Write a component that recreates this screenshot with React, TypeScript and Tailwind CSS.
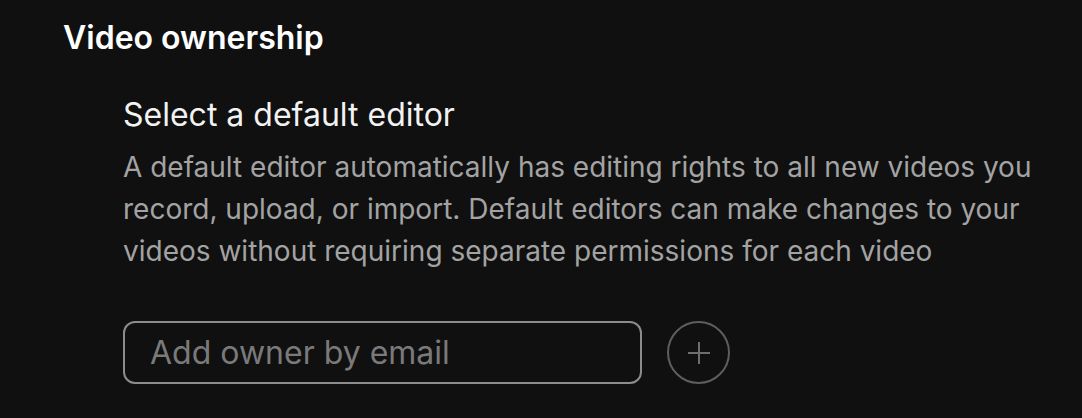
export default function App() {
  return (
    <div
      className="h-[418px] w-full bg-[#101010] pl-[63px] pt-[18px]"
      style={{ fontFamily: "Inter, 'Noto Sans', sans-serif" }}
    >
      <h2 className="text-[32px] font-semibold leading-[40px] text-white">Video ownership</h2>

      <div className="pl-[60px] pt-[37px]">
        <h3 className="text-[32px] font-normal leading-[40px] text-[#f2f2f2]">Select a default editor</h3>
        <p className="mt-[11px] w-[930px] text-[28px] leading-[42px] text-[#a3a3a3]">
          A default editor automatically has editing rights to all new videos you record, upload, or import. Default
          editors can make changes to your videos without requiring separate permissions for each video
        </p>

        <div className="mt-[49px] flex items-center gap-[25px]">
          <input
            type="text"
            placeholder="Add owner by email"
            className="h-[63px] w-[519px] rounded-[12px] border-2 border-[#8c8c8c] bg-transparent px-[25px] text-[32px] text-white outline-none placeholder:text-[#7a7a7a]"
          />
          <button className="flex h-[63px] w-[63px] items-center justify-center rounded-full border-2 border-[#5e5e5e]">
            <svg width="24" height="24" viewBox="0 0 24 24" fill="none" stroke="#6e6e6e" strokeWidth="2">
              <path d="M12 1v22M1 12h22" />
            </svg>
          </button>
        </div>
      </div>
    </div>
  );
}
